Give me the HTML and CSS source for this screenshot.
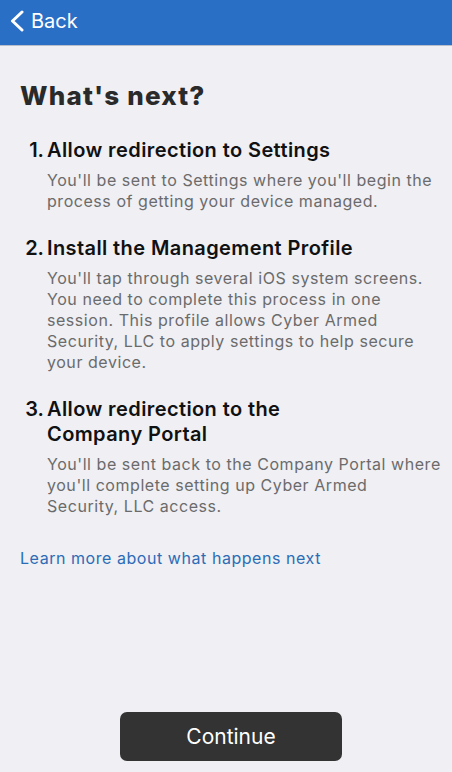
FILE: index.html
```html
<!DOCTYPE html>
<html lang="en">
<head>
<meta charset="utf-8">
<title>What's next?</title>
<link rel="stylesheet" href="styles.css">
</head>
<body>
<div class="screen">
  <header class="nav">
    <a class="back" href="#">
      <svg class="chevron" width="16" height="22" viewBox="0 0 16 22" aria-hidden="true">
        <path d="M13 2 L3.5 11 L13 20" fill="none" stroke="#fff" stroke-width="3" stroke-linecap="round" stroke-linejoin="round"/>
      </svg>
      <span>Back</span>
    </a>
  </header>
  <main class="content">
    <h1 class="title">What's next?</h1>
    <ol class="steps">
      <li class="step">
        <span class="num">1.</span>
        <div class="step-body">
          <h2 class="step-title">Allow redirection to Settings</h2>
          <p class="step-text">You'll be sent to Settings where you'll begin the process of getting your device managed.</p>
        </div>
      </li>
      <li class="step">
        <span class="num">2.</span>
        <div class="step-body">
          <h2 class="step-title">Install the Management Profile</h2>
          <p class="step-text">You'll tap through several iOS system screens. You need to complete this process in one session. This profile allows Cyber Armed Security, LLC to apply settings to help secure your device.</p>
        </div>
      </li>
      <li class="step">
        <span class="num">3.</span>
        <div class="step-body">
          <h2 class="step-title">Allow redirection to the<br>Company Portal</h2>
          <p class="step-text">You'll be sent back to the Company Portal where you'll complete setting up Cyber Armed<br>Security, LLC access.</p>
        </div>
      </li>
    </ol>
    <a class="learn" href="#">Learn more about what happens next</a>
  </main>
  <footer class="actions">
    <button class="continue" type="button">Continue</button>
  </footer>
</div>
</body>
</html>
```
FILE: styles.css
```css
* { box-sizing: border-box; }
html, body {
  margin: 0;
  padding: 0;
  height: 100%;
}
body {
  background: #efeff4;
  font-family: Inter, "Noto Sans", "Liberation Sans", sans-serif;
  color: #111;
}
.screen {
  display: flex;
  flex-direction: column;
  height: 100vh;
}
.nav {
  height: 46px;
  background: #2a6fc6;
  border-bottom: 1px solid #b9bfca;
  display: flex;
  align-items: center;
  padding-left: 9px;
  flex-shrink: 0;
}
.back {
  display: flex;
  align-items: center;
  gap: 6px;
  color: #fff;
  text-decoration: none;
  font-size: 20px;
  line-height: 24px;
  margin-top: -4px;
}
.chevron { display: block; }
.content {
  flex: 1;
  padding: 0 5px 0 20px;
}
.title {
  margin: 34px 0 0;
  font-size: 26px;
  line-height: 32px;
  font-weight: 800;
  color: #2a2a2a;
  letter-spacing: 1.2px;
}
.steps {
  list-style: none;
  margin: 26px 0 0;
  padding: 0;
  display: flex;
  flex-direction: column;
  gap: 24px;
}
.step {
  display: flex;
}
.num {
  width: 27px;
  flex-shrink: 0;
  font-size: 20px;
  line-height: 25px;
  font-weight: 600;
  text-align: right;
  padding-right: 3px;
  color: #111;
}
.step-body { flex: 1; }
.step-title {
  margin: 0;
  font-size: 20px;
  line-height: 25px;
  font-weight: 600;
  color: #111;
  letter-spacing: 0.4px;
}
.step-text {
  margin: 7px 0 0;
  font-size: 16px;
  line-height: 21px;
  color: #6b6b6b;
  letter-spacing: 0.55px;
}
.learn {
  display: block;
  margin-top: 31px;
  font-size: 16px;
  line-height: 21px;
  color: #2c6cb6;
  text-decoration: none;
  letter-spacing: 0.55px;
}
.actions {
  display: flex;
  justify-content: center;
  padding-bottom: 11px;
  flex-shrink: 0;
}
.continue {
  width: 222px;
  height: 49px;
  margin-left: 10px;
  border: 0;
  border-radius: 7px;
  background: #333333;
  color: #fff;
  font-family: Inter, "Noto Sans", "Liberation Sans", sans-serif;
  font-size: 21px;
}
```
